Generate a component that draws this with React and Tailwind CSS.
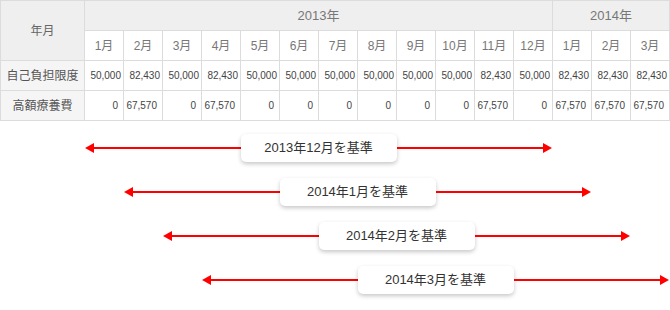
import React from "react";

const months2013 = ["1月", "2月", "3月", "4月", "5月", "6月", "7月", "8月", "9月", "10月", "11月", "12月"];
const months2014 = ["1月", "2月", "3月"];

const limits = [
    "50,000", "82,430", "50,000", "82,430", "50,000", "50,000", "50,000", "50,000", "50,000", "50,000", "82,430", "50,000",
    "82,430", "82,430", "82,430",
];
const highCost = ["0", "67,570", "0", "67,570", "0", "0", "0", "0", "0", "0", "67,570", "0", "67,570", "67,570", "67,570"];

const ranges = [
    { label: "2013年12月を基準", offset: "ml-[85px]" },
    { label: "2014年1月を基準", offset: "ml-[124px]" },
    { label: "2014年2月を基準", offset: "ml-[163px]" },
    { label: "2014年3月を基準", offset: "ml-[202px]" },
];

const cell = "border-r border-b border-[#dcdcdc] flex items-center";

function ArrowHead({ dir }) {
    return (
        <svg width="9" height="10" viewBox="0 0 9 10" className="shrink-0">
            {dir === "left" ? (
                <polygon points="0,5 9,0 9,10" fill="#ff0000" />
            ) : (
                <polygon points="9,5 0,0 0,10" fill="#ff0000" />
            )}
        </svg>
    );
}

function RangeRow({ label, offset }) {
    return (
        <div className={`${offset} w-[467px] h-[44px] flex items-center`}>
            <ArrowHead dir="left" />
            <div className="flex-1 h-[2px] bg-[#ff0000]" />
            <div className="w-[156px] h-[28px] bg-white rounded-[5px] shadow-[0_2px_4px_rgba(0,0,0,0.22)] flex items-center justify-center text-[13px] text-[#333]">
                {label}
            </div>
            <div className="flex-1 h-[2px] bg-[#ff0000]" />
            <ArrowHead dir="right" />
        </div>
    );
}

export default function App() {
    return (
        <div
            className="w-[670px] h-[310px] bg-white"
            style={{ fontFamily: '"Liberation Sans", "Noto Sans CJK JP", sans-serif' }}
        >
            <div className="grid grid-cols-[84px_repeat(15,39px)] grid-rows-[30px_30px_30px_30px] border-l border-t border-[#dcdcdc] w-[670px]">
                <div className={`${cell} row-span-2 justify-center bg-[#efefef] text-[12px] text-[#666]`}>年月</div>
                <div className={`${cell} col-span-12 justify-center bg-[#efefef] text-[13px] text-[#777]`}>2013年</div>
                <div className={`${cell} col-span-3 justify-center bg-[#efefef] text-[13px] text-[#777]`}>2014年</div>

                {[...months2013, ...months2014].map((m, i) => (
                    <div key={"m" + i} className={`${cell} justify-center text-[12px] text-[#777]`}>
                        {m}
                    </div>
                ))}

                <div className={`${cell} justify-center bg-[#f5f5f5] text-[12px] text-[#555]`}>自己負担限度</div>
                {limits.map((v, i) => (
                    <div key={"l" + i} className={`${cell} justify-end pr-[2px] text-[10px] text-[#444]`}>
                        {v}
                    </div>
                ))}

                <div className={`${cell} justify-center bg-[#f5f5f5] text-[12px] text-[#555]`}>高額療養費</div>
                {highCost.map((v, i) => (
                    <div key={"h" + i} className={`${cell} justify-end pr-[5px] text-[10px] text-[#444]`}>
                        {v}
                    </div>
                ))}
            </div>

            <div className="flex flex-col mt-[5px]">
                {ranges.map((r) => (
                    <RangeRow key={r.label} label={r.label} offset={r.offset} />
                ))}
            </div>
        </div>
    );
}
